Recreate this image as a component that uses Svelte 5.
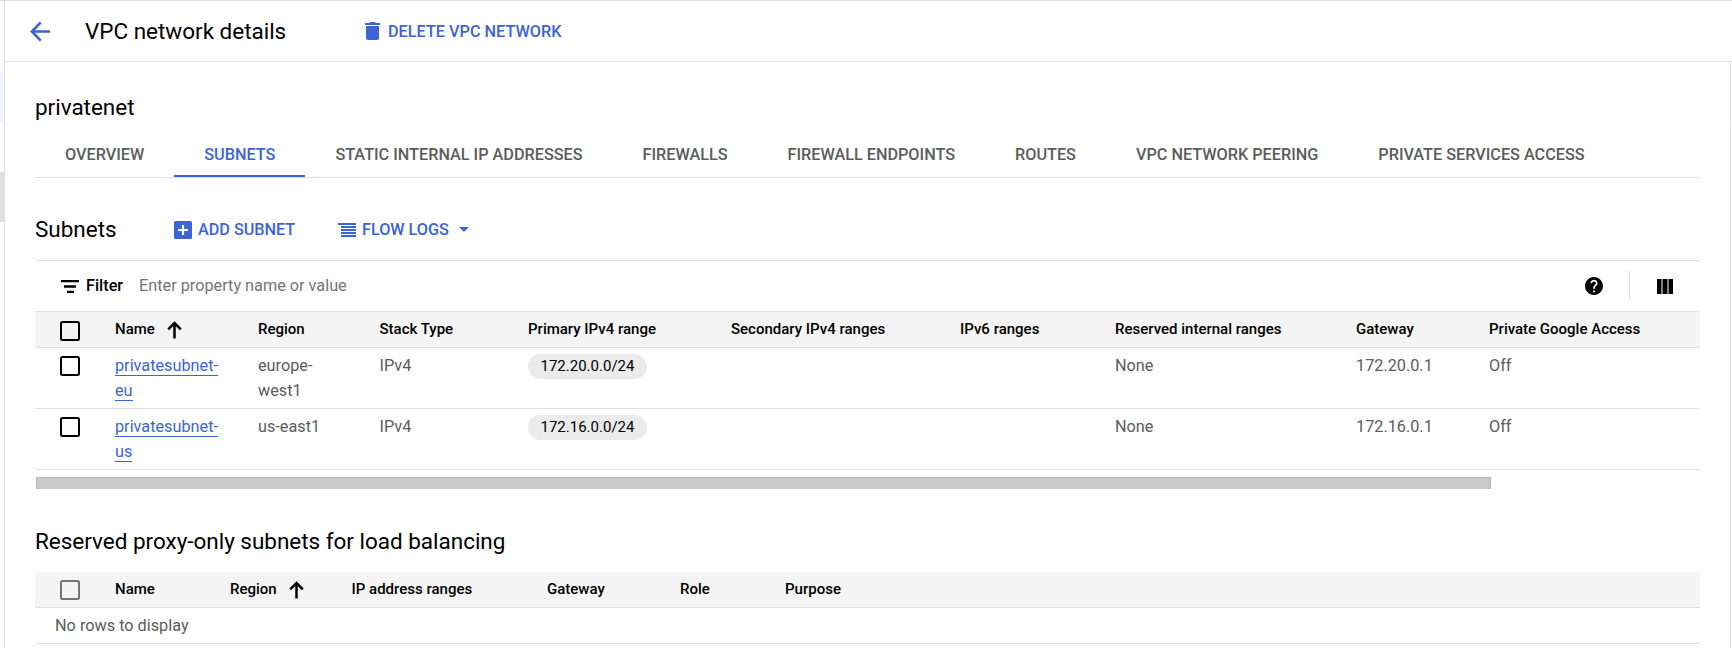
<script>
  const tabs = [
    'OVERVIEW',
    'SUBNETS',
    'STATIC INTERNAL IP ADDRESSES',
    'FIREWALLS',
    'FIREWALL ENDPOINTS',
    'ROUTES',
    'VPC NETWORK PEERING',
    'PRIVATE SERVICES ACCESS',
  ];
  const activeTab = 'SUBNETS';

  const subnetColumns = [
    'Name', 'Region', 'Stack Type', 'Primary IPv4 range', 'Secondary IPv4 ranges',
    'IPv6 ranges', 'Reserved internal ranges', 'Gateway', 'Private Google Access',
  ];
  const subnets = [
    { name: 'privatesubnet-eu', region: 'europe-west1', stack: 'IPv4', range: '172.20.0.0/24', reserved: 'None', gateway: '172.20.0.1', access: 'Off' },
    { name: 'privatesubnet-us', region: 'us-east1', stack: 'IPv4', range: '172.16.0.0/24', reserved: 'None', gateway: '172.16.0.1', access: 'Off' },
  ];
  const proxyColumns = ['Name', 'Region', 'IP address ranges', 'Gateway', 'Role', 'Purpose'];
</script>

{#snippet sortArrow()}
  <svg class="sort" width="15" height="18" viewBox="0 0 15 18">
    <path d="M7.5 17.5V2.2M1.2 8.3 7.5 2l6.3 6.3" fill="none" stroke="#000" stroke-width="2.5" />
  </svg>
{/snippet}

<div class="shell">
  <aside class="rail">
    <div class="hovered"></div>
    <div class="thumb"></div>
  </aside>

  <div class="page">
    <header class="topbar">
      <svg class="back" width="21" height="21" viewBox="0 0 21 21">
        <path d="M20 10.5H2M10.700 1.400 1.900 10.500 10.700 19.600" fill="none" stroke="#3c64d4" stroke-width="2.7" />
      </svg>
      <h1>VPC network details</h1>
      <button class="action">
        <svg width="15" height="18" viewBox="0 0 15 18" fill="#3c64d4">
          <path d="M0 1h4.200l1-1h4.600l1 1H15v2H0zM1 4h13v12a2 2 0 0 1-2 2H3a2 2 0 0 1-2-2z" />
        </svg>
        <span>DELETE VPC NETWORK</span>
      </button>
    </header>

    <div class="body">
      <main>
        <h2 class="network">privatenet</h2>

        <nav class="tabs">
          {#each tabs as tab}
            <div class="tab" class:active={tab === activeTab}>{tab}</div>
          {/each}
        </nav>

        <div class="section-head">
          <h2>Subnets</h2>
          <button class="action add">
            <svg width="18" height="18" viewBox="0 0 18 18">
              <rect width="18" height="18" rx="1.5" fill="#3c64d4" />
              <path d="M9 4v10M4 9h10" stroke="#fff" stroke-width="2.2" />
            </svg>
            <span>ADD SUBNET</span>
          </button>
          <button class="action logs">
            <svg width="18" height="14" viewBox="0 0 18 14">
              <path d="M0 1h18M3 4h15M3 7h15M3 10h15M3 13h15" stroke="#3c64d4" stroke-width="1.900" />
            </svg>
            <span>FLOW LOGS</span>
            <svg class="caret" width="10" height="5" viewBox="0 0 10 5"><path d="M0 0h10L5 5z" fill="#3c64d4" /></svg>
          </button>
        </div>

        <div class="filter">
          <svg width="18" height="13" viewBox="0 0 18 13">
            <path d="M0 1.2h18M3 6.5h12M6 11.8h7" stroke="#000" stroke-width="2.3" />
          </svg>
          <b>Filter</b>
          <span class="placeholder">Enter property name or value</span>
          <svg class="help" width="18" height="18" viewBox="2 2 20 20">
            <path d="M12 2C6.48 2 2 6.48 2 12s4.48 10 10 10 10-4.48 10-10S17.52 2 12 2zm1 17h-2v-2h2v2zm2.07-7.75-.9.92C13.45 12.9 13 13.5 13 15h-2v-.5c0-1.1.45-2.1 1.17-2.83l1.24-1.26c.37-.36.59-.86.59-1.41 0-1.1-.9-2-2-2s-2 .9-2 2H8c0-2.21 1.79-4 4-4s4 1.79 4 4c0 .88-.36 1.68-.93 2.25z" />
          </svg>
          <div class="divider"></div>
          <svg class="columns" width="16" height="15" viewBox="0 0 16 15">
            <path d="M0 0h4.5v15H0zM5.5 0h5v15h-5zM11.5 0H16v15h-4.5z" />
          </svg>
        </div>

        <div class="row subnets header">
          <div><span class="box"></span></div>
          {#each subnetColumns as column}
            <div>{column}{#if column === 'Name'}{@render sortArrow()}{/if}</div>
          {/each}
        </div>
        {#each subnets as s}
          <div class="row subnets data">
            <div><span class="box"></span></div>
            <div><a href="#{s.name}">{s.name}</a></div>
            <div class="region">{s.region}</div>
            <div>{s.stack}</div>
            <div><span class="chip">{s.range}</span></div>
            <div></div>
            <div></div>
            <div>{s.reserved}</div>
            <div>{s.gateway}</div>
            <div>{s.access}</div>
          </div>
        {/each}
        <div class="scrollbar"></div>

        <h2 class="proxy-title">Reserved proxy-only subnets for load balancing</h2>
        <div class="row proxies header">
          <div><span class="box muted"></span></div>
          {#each proxyColumns as column}
            <div>{column}{#if column === 'Region'}{@render sortArrow()}{/if}</div>
          {/each}
        </div>
        <div class="empty">No rows to display</div>
      </main>
      <div class="side"><div></div></div>
    </div>
  </div>
</div>

<style>
  :global(body) { background: #fff; overflow: hidden; }
  .shell {
    display: flex;
    box-sizing: border-box;
    width: 1732px;
    height: 648px;
    border-top: 1px solid #dfdfdf;
    overflow: hidden;
    font: 16.25px/25px Roboto, sans-serif;
    color: #5c5c5c;
  }
  .rail { width: 4px; flex: none; padding-top: 71px; }
  .hovered { height: 50px; background: #eff5fe; }
  .thumb { height: 50px; margin-top: 50px; background: #dfdfdf; }
  .page { flex: 1; border-left: 1px solid #dfdfdf; min-width: 0; }
  .topbar { height: 60px; display: flex; align-items: center; border-bottom: 1px solid #dfdfdf; }
  .back { margin-left: 25px; }
  h1, h2 { margin: 0; font-weight: 400; font-size: 22.5px; line-height: 30px; color: #000; white-space: nowrap; }
  h1 { margin-left: 34px; width: 280px; letter-spacing: -0.02px; }
  h2 { letter-spacing: -0.02px; }
  .action {
    display: flex; align-items: center; gap: 8px; padding: 0; border: 0; background: none;
    font: 500 16.25px/25px Roboto, sans-serif; color: #3c64d4; white-space: nowrap;
  }
  .body { display: flex; height: 586px; }
  main { flex: 1; padding: 30px 30px 0; min-width: 0; }
  .side { width: 1px; border-left: 1px solid #dfdfdf; }
  .side div { height: 61px; border-bottom: 1px solid #dfdfdf; }
  .tabs { display: flex; height: 54px; margin-top: 1px; border-bottom: 1px solid #dfdfdf; }
  .tab { box-sizing: border-box; height: 54px; padding: 19px 30px 0; font-weight: 500; letter-spacing: -0.012px; white-space: nowrap; }
  .tab.active { color: #3c64d4; border-bottom: 2px solid #3c64d4; }
  .section-head { display: flex; align-items: center; height: 82px; box-sizing: border-box; padding-top: 22px; }
  .section-head h2 { width: 139px; margin-bottom: 2px; }
  .section-head .action span { margin-bottom: 1px; letter-spacing: -0.03px; }
  .add { width: 164px; gap: 6px; }
  .logs { gap: 6px; }
  .logs svg { margin-bottom: 1px; }
  .caret { margin-left: 4px; }
  .filter { display: flex; align-items: center; height: 50px; border-top: 1px solid #dfdfdf; border-bottom: 1px solid #dfdfdf; padding: 0 27px 0 26px; }
  .filter b { font-weight: 500; color: #000; margin: 0 0 1px 7px; width: 53px; }
  .placeholder { color: #757575; flex: 1; margin-bottom: 1px; }
  .divider { width: 1px; height: 30px; background: #dfdfdf; margin: 0 27px 0 26px; }
  .row { display: grid; border-bottom: 1px solid #dfdfdf; }
  .subnets { grid-template-columns: 80px 143px 121.5px 148.500px 203px 229px 155px 241px 133px 1fr; }
  .proxies { grid-template-columns: 80px 115px 121.5px 195.500px 133px 105px 1fr; }
  .header { height: 35px; align-items: center; background: #f4f4f4; color: #000; font-size: 15px; font-weight: 500; }
  .header > div { display: flex; align-items: center; white-space: nowrap; height: 25px; }
  .sort { margin-left: 12.5px; }
  .box { display: block; box-sizing: border-box; width: 20px; height: 20px; margin-left: 25px; border: 2px solid #000; border-radius: 2.5px; }
  .box.muted { border-color: #757575; }
  .header .box { margin-top: 2px; }
  .header .box.muted { margin-top: 0; }
  .data { padding: 5px 0; height: 50px; }
  .data .box { margin-top: 3px; }
  .data > div:nth-child(2) { width: 110px; }
  .region { width: 80px; }
  a { color: #3c64d4; text-decoration: none; border-bottom: 1px solid #3c64d4; }
  .chip { display: inline-block; padding: 0 12.5px; height: 25px; margin-top: 1px; border-radius: 12.5px; background: #ebebeb; color: #000; font-size: 15px; line-height: 24px; vertical-align: top; }
  .scrollbar { box-sizing: border-box; width: 1455px; height: 12px; margin: 7px 0 0 1px; background: #cacaca; border: 1px solid #b4b4b4; border-bottom: 0; }
  .proxy-title { margin: 37px 0 16px; }
  .empty { padding: 5px 20px; border-bottom: 1px solid #dfdfdf; }
</style>
